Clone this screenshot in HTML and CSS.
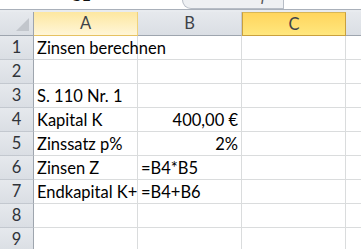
FILE: index.html
```html
<!DOCTYPE html><html><head><meta charset="utf-8">
<meta name="viewport" content="initial-scale=1.0, width=device-width">
<title>Zinsen</title>
<link rel="stylesheet" href="styles.css">
</head>
<body>

<div class="fbar">
  <div class="namebox"><span class="clip">C1</span></div>
  <div class="btns"><span class="clip fx">fx</span></div>
  <div class="input"></div>
</div>
<div class="fsep"></div>

<div class="sheet">
  <div class="corner"></div>
  <div class="colhead sel-soft">A</div>
  <div class="colhead">B</div>
  <div class="colhead sel">C</div>
  <div class="colhead last"></div>

  <div class="rowhead">1</div>
  <div class="cell">Zinsen berechnen</div>
  <div class="cell"></div>
  <div class="cell"></div>
  <div class="cell last"></div>

  <div class="rowhead">2</div>
  <div class="cell"></div>
  <div class="cell"></div>
  <div class="cell"></div>
  <div class="cell last"></div>

  <div class="rowhead">3</div>
  <div class="cell">S. 110 Nr. 1</div>
  <div class="cell"></div>
  <div class="cell"></div>
  <div class="cell last"></div>

  <div class="rowhead">4</div>
  <div class="cell">Kapital K</div>
  <div class="cell num">400,00 €</div>
  <div class="cell"></div>
  <div class="cell last"></div>

  <div class="rowhead">5</div>
  <div class="cell">Zinssatz p%</div>
  <div class="cell num">2%</div>
  <div class="cell"></div>
  <div class="cell last"></div>

  <div class="rowhead">6</div>
  <div class="cell">Zinsen Z</div>
  <div class="cell">=B4*B5</div>
  <div class="cell"></div>
  <div class="cell last"></div>

  <div class="rowhead">7</div>
  <div class="cell">Endkapital K+</div>
  <div class="cell">=B4+B6</div>
  <div class="cell"></div>
  <div class="cell last"></div>

  <div class="rowhead">8</div>
  <div class="cell"></div>
  <div class="cell"></div>
  <div class="cell"></div>
  <div class="cell last"></div>

  <div class="rowhead">9</div>
  <div class="cell"></div>
  <div class="cell"></div>
  <div class="cell"></div>
  <div class="cell last"></div>
</div>

</body>
</html>
```

FILE: styles.css
```css
html,body,div{margin:0;padding:0;}
*{box-sizing:border-box;}
body{
  color:#000;
  font-family:Lato,"Liberation Sans",Arial,sans-serif;
  font-size:16.5px;
  background:#fff;
  width:361px;
  height:249px;
  overflow:hidden;
}

/* formula bar, mostly scrolled off the top */
.fbar{
  display:flex;
  height:9px;
  background:#fff;
  overflow:hidden;
}
.namebox{width:182px;position:relative;}
.btns{
  width:102px;
  background:#eef0f3;
  border:1px solid #b7bdc6;
  border-top:none;
  border-bottom-left-radius:9px;
  position:relative;
}
.input{flex:1;}
.clip{
  position:absolute;
  bottom:4px;
  line-height:20px;
  height:20px;
  color:#111;
  font-size:17px;
}
.namebox .clip{left:70px;}
.btns .fx{left:78px;bottom:3px;font-style:italic;font-family:"Liberation Serif",serif;color:#555;}
.fsep{
  height:3px;
  border-top:1px solid #a9b0ba;
  background:#e8ebef;
}

.sheet{
  display:grid;
  grid-template-columns:34px 104px 104px 104px 1fr;
  grid-auto-rows:24px;
}
.corner,.colhead,.rowhead{
  background:linear-gradient(#e6e9ed,#dadee4);
  color:#3e4248;
  border-right:1px solid #c3c8cf;
  border-bottom:1px solid #9ea5ae;
  text-align:center;
  line-height:23px;
}
.corner{
  position:relative;
  border-right:1px solid #9ea5ae;
}
.corner::after{
  content:"";
  position:absolute;
  right:4px;bottom:4px;
  border-style:solid;
  border-width:0 0 13px 13px;
  border-color:transparent transparent #c2c6cc transparent;
}
.colhead.sel-soft{
  background:linear-gradient(#fde7a0,#fff6d8);
  border-right:1px solid #f0d27a;
  border-bottom:1px solid #e6c262;
}
.colhead.sel{
  background:linear-gradient(#ffd55d,#ffe77e);
  border:1px solid #c9a03e;
  border-top-color:#d8b656;
}
.colhead.last{border-right:none;}
.rowhead{
  border-right:1px solid #9ea5ae;
  border-bottom:1px solid #c3c8cf;
  color:#30343a;
}
.cell{
  border-right:1px solid #dadcdd;
  border-bottom:1px solid #dadcdd;
  padding:2px 3px 0 3px;
  line-height:21px;
  white-space:nowrap;
}
.cell.num{text-align:right;}
.cell.last{border-right:none;}
```
